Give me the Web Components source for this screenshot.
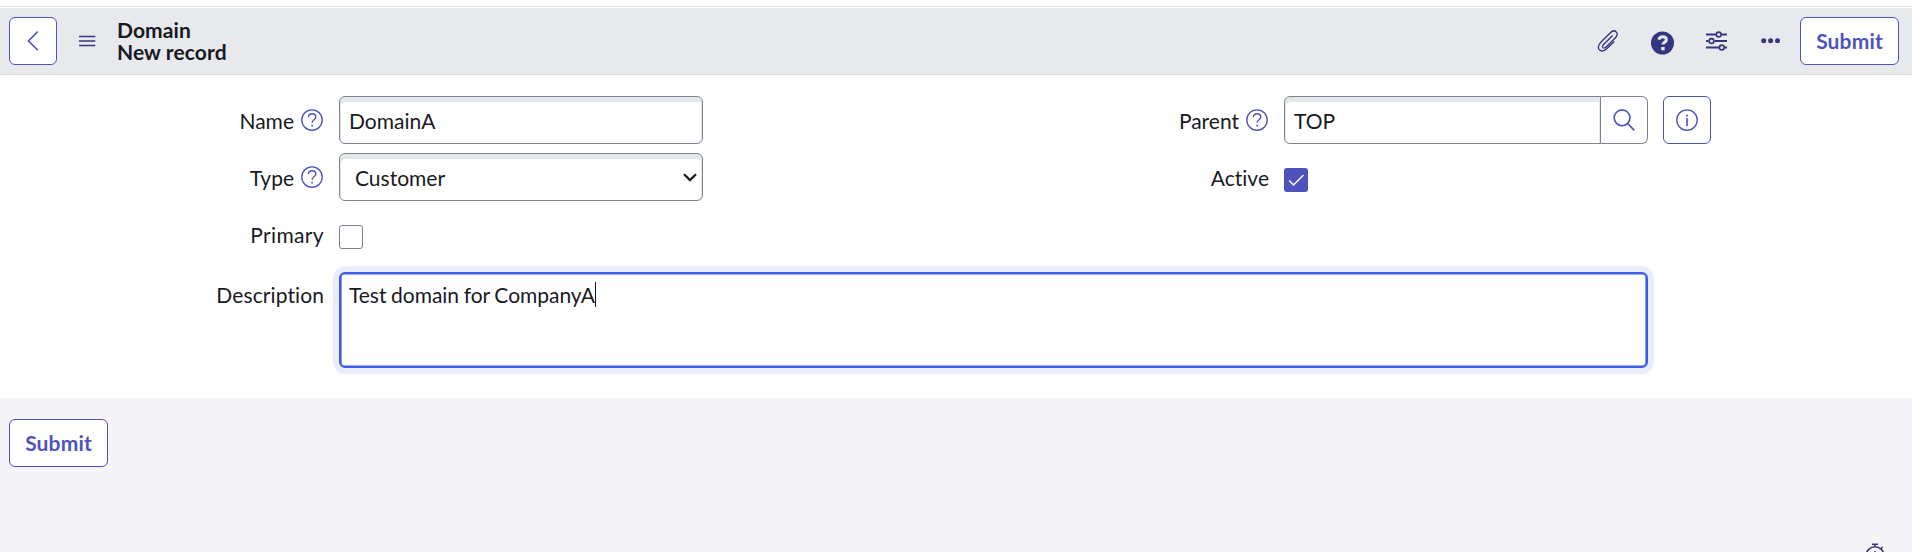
<!DOCTYPE html>
<html lang="en"><head><meta charset="utf-8"><title>Domain - New record</title>
<style>
html,body{margin:0;height:100%;overflow:hidden}
body{font-family:Lato,"Open Sans",sans-serif;font-size:21px;line-height:26px;font-variant-ligatures:none;color:#181a1f;background:#f5f5f8}
</style></head><body>
<record-form></record-form>
<script>
const define=(name,html)=>{
  const t=document.createElement('template');t.innerHTML=html;
  customElements.define(name,class extends HTMLElement{
    constructor(){super();this.attachShadow({mode:'open'}).append(t.content.cloneNode(true));}
  });
};

const ICONS={
 back:[48,48,'<path d="M28.8 14.6 19.4 23.9l9.4 9.3" stroke-width="1.5"/>'],
 menu:[17,12,'<path d="M0 1.5h16.300M0 6h16.300M0 10.500h16.300" stroke-width="1.7"/>'],
 clip:[22,24,'<path d="M15.6 6.400 7.300 14.700c-1.500 1.500-2.500 3.200-1.300 4.100 1.200.8 2.600-.2 3.900-1.500l8.300-8.300c2.200-2.200 2.600-4.700 1.100-6.100-1.500-1.500-4.100-1-6.100 1L4.500 12.600c-2.700 2.700-4.100 6-2.100 8.200 2.200 2.200 5.400.9 8.100-1.800l6.700-6.600" stroke-width="1.35"/>'],
 helpfill:[24,24,'<circle cx="11.500" cy="12" r="11.500" fill="currentColor" stroke="none"/><path d="M7.800 8.600c.6-1.900 2-2.900 4-2.900 2.200 0 3.600 1.200 3.600 3 0 2.700-3.500 2.500-3.500 4.900" stroke="#e8e9ed" stroke-width="3"/><path d="M10.200 16h3.500v3.300h-3.500z" fill="#e8e9ed" stroke="none"/>'],
 sliders:[22,20,'<path d="M0 3.500h10M15.500 3.500h5.500M0 10H2.500M8.500 10h12.500M0 16.500h13M18.500 16.500h2.500" stroke-width="1.8"/><circle cx="12.700" cy="3.500" r="2.400" stroke-width="1.600"/><circle cx="5.500" cy="10" r="2.400" stroke-width="1.600"/><circle cx="15.800" cy="16.500" r="2.400" stroke-width="1.600"/>'],
 dots:[20,6,'<g fill="currentColor" stroke="none"><circle cx="2.700" cy="2.700" r="2.500"/><circle cx="9.600" cy="2.700" r="2.500"/><circle cx="16.500" cy="2.700" r="2.500"/></g>'],
 help:[22,22,'<circle cx="11" cy="11" r="10.200" stroke-width="1.350"/><path d="M7.300 8.100c.2-2.100 1.600-3.400 3.800-3.400 2.200 0 3.700 1.300 3.700 3.200 0 3-3.700 2.600-3.700 5.900" stroke-width="1.350"/><path d="M10.300 15.700h1.600v1.700h-1.600z" fill="currentColor" stroke="none"/>'],
 search:[22,22,'<circle cx="9.100" cy="8.800" r="7.900" stroke-width="1.600"/><path d="m14.600 14.500 6.700 6.800" stroke-width="1.700"/>'],
 info:[22,22,'<circle cx="11" cy="11" r="10.200" stroke-width="1.350"/><path d="M11 9v8.200" stroke-width="1.600"/><path d="M10.100 5.800h1.800v1.800h-1.800z" fill="currentColor" stroke="none"/>'],
 chevron:[14,9,'<path d="m1 1.200 6 5.900 6-5.900" stroke-width="2.200"/>'],
 check:[24,24,'<path d="m5.200 12.600 4.300 4.400L19.500 7" stroke-width="1.500"/>'],
 timer:[20,24,'<circle cx="10" cy="12.700" r="8.900" stroke-width="1.600"/><path d="M7 1.200h6M10 1.200v2.400M10 8v5M15.900 5.500l1.700-1.500" stroke-width="1.600"/>']
};
customElements.define('line-icon',class extends HTMLElement{
  connectedCallback(){
    const [w,h,d]=ICONS[this.getAttribute('name')];
    if(!this.shadowRoot)this.attachShadow({mode:'open'});
    this.shadowRoot.innerHTML=`<style>:host{display:block;flex:none;width:${w}px;height:${h}px}svg{display:block}</style><svg width="${w}" height="${h}" viewBox="0 0 ${w} ${h}" fill="none" stroke="currentColor">${d}</svg>`;
  }
});

define('outline-button',`<style>
:host{display:flex;box-sizing:border-box;flex:none;width:48px;height:48px;border:1px solid #4f52bd;border-radius:6px;background:#fff;color:#4f52bd;align-items:center;justify-content:center;font-weight:700;letter-spacing:.15px}
:host([wide]){width:99px}
</style><slot></slot>`);

define('field-label',`<style>
:host{display:flex;justify-content:flex-end;gap:7px;padding:12px 15px 0 0;white-space:nowrap}
::slotted(line-icon){color:#4f52bd;margin:.5px 1px 0 0}
</style><slot></slot><slot name="hint"></slot>`);

define('text-field',`<style>
:host{display:flex;box-sizing:border-box;height:48px;border:1px solid #7c8390;border-radius:6px;background:#fff;box-shadow:inset 1px 5px 0 #e6e8e8,inset -1px 0 0 #e6e8e8;padding:11px 9px 0;justify-content:space-between}
:host([select]){padding-left:15px;padding-right:5px}
:host([joined]){border-radius:6px 0 0 6px;flex:1}
::slotted(line-icon){margin-top:8px}
</style><slot></slot>`);

define('check-box',`<style>
:host{display:block;box-sizing:border-box;width:24px;height:24px;border:1px solid #7c8390;border-radius:3px;background:#fff;margin-top:15px}
:host([checked]){border:0;background:#4f52bd;color:#fff}
</style><slot></slot>`);

define('reference-field',`<style>
:host{display:flex}
.search{box-sizing:border-box;width:47px;height:48px;border:1px solid #7c8390;border-left:0;border-radius:0 6px 6px 0;display:flex;justify-content:center;padding-top:12px;color:#4f52bd}
outline-button{margin-left:15px}
</style><text-field joined><slot></slot></text-field><div class="search"><line-icon name="search"></line-icon></div><outline-button><line-icon name="info"></line-icon></outline-button>`);

define('text-area',`<style>
:host{display:flex;box-sizing:border-box;height:96px;border:2px solid #3f5be6;border-radius:6px;background:#fff;box-shadow:inset 0 0 0 .6px #3f5be6,0 0 0 6px #e9edfd;padding:8px 0 0 8px}
.caret{width:1px;height:25px;background:#181a1f}
.text{word-spacing:-.7px;letter-spacing:-.03px}
</style><span class="text"><slot></slot></span><span class="caret"></span>`);

define('form-header',`<style>
:host{display:flex;box-sizing:border-box;height:69px;margin-top:6px;border-top:1px solid #dddfe0;border-bottom:1px solid #dcdde1;background:#e8e9ed;box-shadow:inset 0 1px #fff;padding:10px 13px 0 9px;align-items:flex-start}
h1{margin:2px 0 0 21px;font-size:21px;line-height:22px;font-weight:700;letter-spacing:.1px}
line-icon{color:#343580}
.menu{margin:18px 0 0 22px}
.tools{margin-left:auto;display:flex;align-items:flex-start}
</style><outline-button><line-icon name="back" style="color:#4f52bd;margin:-1px"></line-icon></outline-button><line-icon class="menu" name="menu"></line-icon>
<h1>Domain<br>New record</h1>
<div class="tools"><line-icon name="clip" style="margin:12px 32px 0 0"></line-icon><line-icon name="helpfill" style="margin:14px 31px 0 0"></line-icon><line-icon name="sliders" style="margin:14px 33px 0 0"></line-icon><line-icon name="dots" style="margin:21px 19px 0 0"></line-icon><outline-button wide>Submit</outline-button></div>`);

define('form-grid',`<style>
:host{display:grid;box-sizing:border-box;height:323px;background:#fff;padding-top:21px;grid-template-columns:339px 364px 581px 427px;grid-template-rows:48px 48px 48px 96px;row-gap:9px;align-content:start}
.area{grid-column:2 / 5;margin-right:63px;margin-top:5px;height:96px}
.primary{grid-column:1;letter-spacing:.35px}
.desc{grid-column:1;padding-top:15px;letter-spacing:.1px}
</style>
<field-label>Name<line-icon slot="hint" name="help"></line-icon></field-label><text-field>DomainA</text-field>
<field-label>Parent<line-icon slot="hint" name="help"></line-icon></field-label><reference-field>TOP</reference-field>
<field-label>Type<line-icon slot="hint" name="help"></line-icon></field-label><text-field select><span>Customer</span><line-icon name="chevron"></line-icon></text-field>
<field-label>Active</field-label><check-box checked><line-icon name="check"></line-icon></check-box>
<field-label class="primary">Primary</field-label><check-box></check-box>
<field-label class="desc">Description</field-label><text-area class="area">Test domain for CompanyA</text-area>`);

define('record-form',`<style>
:host{display:flex;flex-direction:column;height:552px;overflow:hidden}
.top{background:#fff;display:flow-root}
.foot{display:flex;flex:1;justify-content:space-between;align-items:flex-start;padding:21px 27px 0 9px}
.foot line-icon{color:#343580;margin-top:124px}
</style><div class="top"><form-header></form-header><form-grid></form-grid></div><div class="foot"><outline-button wide>Submit</outline-button><line-icon name="timer"></line-icon></div>`);
</script></body></html>
